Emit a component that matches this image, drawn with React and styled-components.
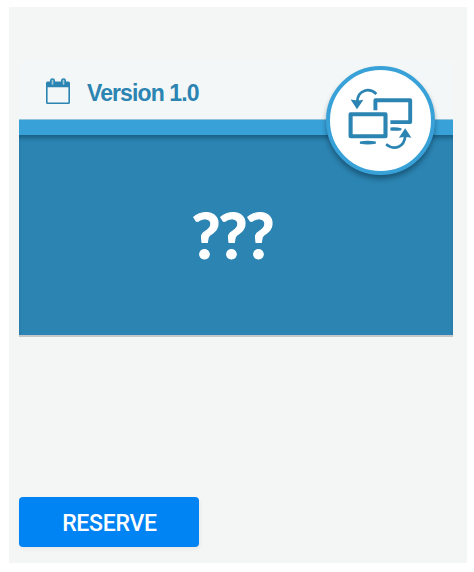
import React from "react";
import styled, { createGlobalStyle } from "styled-components";

const GlobalStyle = createGlobalStyle`
  * { box-sizing: border-box; }
  body { margin: 0; background: #fff; }
`;

const Panel = styled.main`
  display: flex;
  flex-direction: column;
  align-items: flex-start;
  width: 458px;
  height: 556px;
  margin: 7px 0 0 9px;
  padding: 53px 14px 16px 10px;
  background: #f4f6f6;
`;

const Card = styled.section`
  position: relative;
  width: 434px;
  height: 277px;
  border-bottom: 2px solid #c3c7c9;
`;

const Header = styled.header`
  display: flex;
  align-items: center;
  gap: 17px;
  height: 59px;
  padding: 3px 0 0 27px;
  background: #f4f7f8;
`;

const CalendarIcon = styled.svg`
  display: block;
  width: 24px;
  height: 26px;
`;

const Version = styled.span`
  padding-top: 4px;
  font: 700 23px/28px "Liberation Sans", Arial, sans-serif;
  letter-spacing: -0.9px;
  color: #2b84b1;
  white-space: nowrap;
`;

const Stripe = styled.div`
  height: 16px;
  border-top: 1px solid #91c5dd;
  background: #38a2d8;
`;

const Body = styled.div`
  display: flex;
  justify-content: center;
  height: 200px;
  padding: 56px 8px 0 0;
  background: #2b84b1;
  box-shadow: inset 0 5px 4px -2px rgba(0, 35, 60, 0.38);
`;

const Marks = styled.span`
  font: 700 63px/88px Lato, sans-serif;
  letter-spacing: -2px;
  color: #fff;
  -webkit-text-stroke: 1px #fff;
`;

const Badge = styled.div`
  position: absolute;
  top: 6px;
  left: 307px;
  display: flex;
  width: 109px;
  height: 109px;
  border: 4px solid #38a2d8;
  border-radius: 50%;
  background: #fff;
  box-shadow: 0 4px 5px rgba(0, 25, 45, 0.4);
`;

const SyncIcon = styled.svg`
  display: block;
  width: 101px;
  height: 101px;
`;

const ReserveButton = styled.button`
  width: 180px;
  height: 50px;
  margin-top: auto;
  padding: 3px 0 0 1px;
  border: 0;
  border-radius: 4px;
  background: #0083f3;
  box-shadow: 1px 2px 4px rgba(0, 0, 0, 0.06);
  color: #fff;
  font: 500 23px/28px Roboto, sans-serif;
  letter-spacing: -0.25px;
`;

function Calendar() {
  return (
    <CalendarIcon viewBox="0 0 24 26" aria-hidden="true">
      <path
        fill="#2b84b1"
        fillRule="evenodd"
        d="M1.5 3.5h21q1.5 0 1.5 1.5v19.5q0 1.5-1.5 1.5h-21q-1.5 0-1.5-1.5V5q0-1.5 1.5-1.5M1.6 9.2V24.4H22.4V9.2z"
      />
      <path
        d="M4 5.5V2.5q0-2.3 2.5-2.3t2.5 2.3V5.5q0 2-2.5 2t-2.5-2zM15 5.5V2.5q0-2.3 2.5-2.3t2.5 2.3V5.5q0 2-2.5 2t-2.5-2z"
        fill="#2b84b1"
      />
      <path d="M6.5 2.5V6M17.5 2.5V6" stroke="#9bc8dc" strokeWidth="1.7" strokeLinecap="round" />
    </CalendarIcon>
  );
}

function Sync() {
  return (
    <SyncIcon viewBox="330.6 70.8 101 101" aria-hidden="true">
      <g fill="none" stroke="#2b84b1">
        <path d="M376 111v-9.9h34.8v21.8H391" strokeWidth="3.9" strokeLinejoin="round" />
        <rect x="351.2" y="115" width="34.9" height="22" strokeWidth="4.1" strokeLinejoin="round" />
        <path d="M377 94.7C369 87.5 358.500 91.5 357.8 102" strokeWidth="2.7" />
        <path d="M386.7 145C395.5 152 405 147.5 405.8 137" strokeWidth="2.7" />
      </g>
      <g fill="#2b84b1">
        <path d="M351.2 100.4q6 1.5 12.8.2L357.6 110zM399.5 138.5 405.8 129l6.2 9.5q-6-1.3-12.5 0z" />
        <path d="M360.5 142.400Q368.400 140.600 376.400 142.400V144.600Q368.400 146 360.500 144.600zM391 128.200q6-.6 11 .9v2q-6 1-11 .2z" />
      </g>
    </SyncIcon>
  );
}

export default function App() {
  return (
    <>
      <GlobalStyle />
      <Panel>
        <Card>
          <Header>
            <Calendar />
            <Version>Version 1.0</Version>
          </Header>
          <Stripe />
          <Body>
            <Marks>???</Marks>
          </Body>
          <Badge>
            <Sync />
          </Badge>
        </Card>
        <ReserveButton type="button">RESERVE</ReserveButton>
      </Panel>
    </>
  );
}
